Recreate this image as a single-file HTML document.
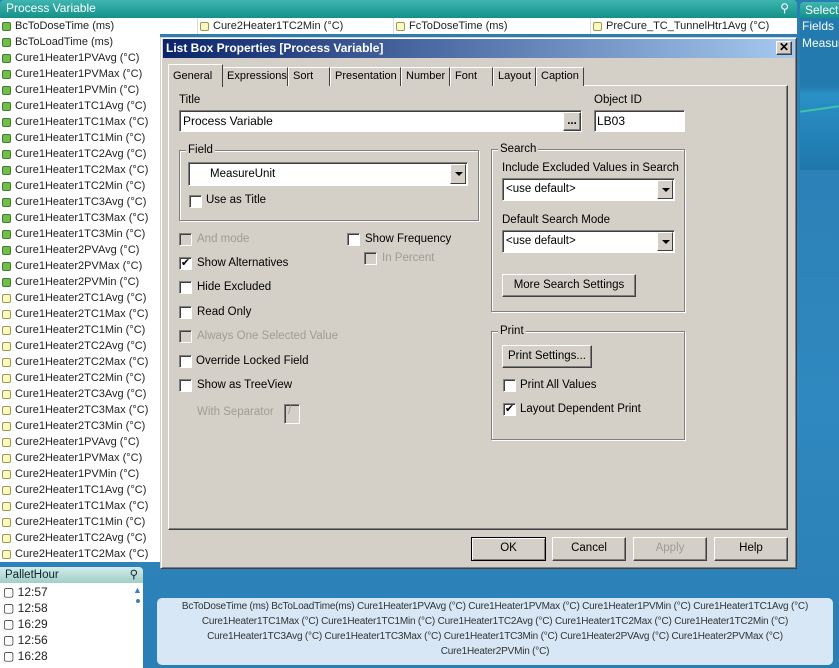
<!DOCTYPE html>
<html><head><meta charset="utf-8">
<style>
*{box-sizing:border-box;margin:0;padding:0}
body{width:839px;height:668px;overflow:hidden;position:relative;font-family:"Liberation Sans",sans-serif;font-size:11.5px;background:linear-gradient(180deg,#2a7db1 0%,#2f88bf 60%,#2a7fb5 100%)}
.a{position:absolute}
.hdr{background:linear-gradient(180deg,#3fb5b0,#139189);color:#fff;font-size:12px;padding-left:6px;line-height:17px;border-radius:4px 4px 0 0}
.row{position:absolute;left:0;height:16px;line-height:16px;font-size:11px;color:#222;white-space:nowrap;padding-left:15px}
.row i{position:absolute;left:2px;top:4px;width:9px;height:9px;border-radius:2px;border:1px solid #4a7a2a;background:#6cc04a}
.row.y i{background:#fdf8c0;border-color:#9a9a55}
.dlg{background:#d4d0c8}
.t{position:absolute;white-space:nowrap;color:#000}
.grey{color:#a09c94}
.inp{position:absolute;background:#fff;border:1px solid;border-color:#808080 #fff #fff #808080;box-shadow:inset 1px 1px 0 #404040}
.btn{position:absolute;background:#d4d0c8;border:1px solid;border-color:#fff #404040 #404040 #fff;box-shadow:inset -1px -1px 0 #808080;text-align:center;color:#000}
.cb{position:absolute;width:13px;height:13px;background:#fff;border:1px solid;border-color:#808080 #fff #fff #808080;box-shadow:inset 1px 1px 0 #404040;font-size:11px;line-height:11px;text-align:center}
.cb.d{background:#d4d0c8}
.grp{position:absolute;border:1px solid #808080;box-shadow:1px 1px 0 #fff, inset 1px 1px 0 #fff}
.grp span{position:absolute;top:-8px;left:6px;background:#d4d0c8;padding:0 2px;line-height:14px}
.dd{position:absolute;right:1px;top:1px;bottom:1px;width:16px;background:#d4d0c8;border:1px solid;border-color:#fff #404040 #404040 #fff}
.dd:after{content:"";position:absolute;left:4px;top:7px;border:4px solid transparent;border-top:4px solid #000;border-bottom:0}
.tab{position:absolute;top:67px;height:19px;border:1px solid;border-color:#fff #404040 transparent #fff;border-bottom:none;line-height:17px;padding-left:4px;background:#d4d0c8;font-size:11px;white-space:nowrap;overflow:hidden}
</style></head><body>

<div class="a hdr" style="left:0;top:0;width:797px;height:18px">Process Variable<span style="position:absolute;right:8px;top:0">&#9906;</span></div>
<div class="a" style="left:0;top:18px;width:797px;height:16px;background:#fff"></div>
<div class="a" style="left:197px;top:18px;width:1px;height:16px;background:#ddd"></div>
<div class="a" style="left:393px;top:18px;width:1px;height:16px;background:#ddd"></div>
<div class="a" style="left:590px;top:18px;width:1px;height:16px;background:#ddd"></div>
<div class="row y" style="left:198px;top:18px"><i></i>Cure2Heater1TC2Min (°C)</div>
<div class="row y" style="left:394px;top:18px"><i></i>FcToDoseTime (ms)</div>
<div class="row y" style="left:591px;top:18px"><i></i>PreCure_TC_TunnelHtr1Avg (°C)</div>
<div class="a" style="left:0;top:34px;width:160px;height:528px;background:#fff"></div>
<div class="row" style="top:18px"><i></i>BcToDoseTime (ms)</div>
<div class="row" style="top:34px"><i></i>BcToLoadTime (ms)</div>
<div class="row" style="top:50px"><i></i>Cure1Heater1PVAvg (°C)</div>
<div class="row" style="top:66px"><i></i>Cure1Heater1PVMax (°C)</div>
<div class="row" style="top:82px"><i></i>Cure1Heater1PVMin (°C)</div>
<div class="row" style="top:98px"><i></i>Cure1Heater1TC1Avg (°C)</div>
<div class="row" style="top:114px"><i></i>Cure1Heater1TC1Max (°C)</div>
<div class="row" style="top:130px"><i></i>Cure1Heater1TC1Min (°C)</div>
<div class="row" style="top:146px"><i></i>Cure1Heater1TC2Avg (°C)</div>
<div class="row" style="top:162px"><i></i>Cure1Heater1TC2Max (°C)</div>
<div class="row" style="top:178px"><i></i>Cure1Heater1TC2Min (°C)</div>
<div class="row" style="top:194px"><i></i>Cure1Heater1TC3Avg (°C)</div>
<div class="row" style="top:210px"><i></i>Cure1Heater1TC3Max (°C)</div>
<div class="row" style="top:226px"><i></i>Cure1Heater1TC3Min (°C)</div>
<div class="row" style="top:242px"><i></i>Cure1Heater2PVAvg (°C)</div>
<div class="row" style="top:258px"><i></i>Cure1Heater2PVMax (°C)</div>
<div class="row" style="top:274px"><i></i>Cure1Heater2PVMin (°C)</div>
<div class="row y" style="top:290px"><i></i>Cure1Heater2TC1Avg (°C)</div>
<div class="row y" style="top:306px"><i></i>Cure1Heater2TC1Max (°C)</div>
<div class="row y" style="top:322px"><i></i>Cure1Heater2TC1Min (°C)</div>
<div class="row y" style="top:338px"><i></i>Cure1Heater2TC2Avg (°C)</div>
<div class="row y" style="top:354px"><i></i>Cure1Heater2TC2Max (°C)</div>
<div class="row y" style="top:370px"><i></i>Cure1Heater2TC2Min (°C)</div>
<div class="row y" style="top:386px"><i></i>Cure1Heater2TC3Avg (°C)</div>
<div class="row y" style="top:402px"><i></i>Cure1Heater2TC3Max (°C)</div>
<div class="row y" style="top:418px"><i></i>Cure1Heater2TC3Min (°C)</div>
<div class="row y" style="top:434px"><i></i>Cure2Heater1PVAvg (°C)</div>
<div class="row y" style="top:450px"><i></i>Cure2Heater1PVMax (°C)</div>
<div class="row y" style="top:466px"><i></i>Cure2Heater1PVMin (°C)</div>
<div class="row y" style="top:482px"><i></i>Cure2Heater1TC1Avg (°C)</div>
<div class="row y" style="top:498px"><i></i>Cure2Heater1TC1Max (°C)</div>
<div class="row y" style="top:514px"><i></i>Cure2Heater1TC1Min (°C)</div>
<div class="row y" style="top:530px"><i></i>Cure2Heater1TC2Avg (°C)</div>
<div class="row y" style="top:546px"><i></i>Cure2Heater1TC2Max (°C)</div>

<div class="a" style="left:800px;top:18px;width:39px;height:152px;background:linear-gradient(180deg,#237aae 0%,#237aae 45%,#2a90c6 50%,#1f77ab 100%)"></div>
<div class="a" style="left:800px;top:108px;width:39px;height:2px;background:#3cc4a8;transform:rotate(-8deg)"></div>
<div class="a hdr" style="left:800px;top:2px;width:45px;height:16px;line-height:16px;padding-left:5px">Selecti</div>
<div class="t" style="left:802px;top:19px;color:#fff;font-size:12px">Fields</div>
<div class="t" style="left:802px;top:36px;color:#fff;font-size:12px">Measur</div>

<div class="a" style="left:0;top:567px;width:143px;height:16px;background:linear-gradient(180deg,#d4ece8,#a0cfc7);border-radius:0 4px 0 0;color:#123;padding-left:5px;line-height:16px">PalletHour<span style="position:absolute;right:5px">&#9906;</span></div>
<div class="a" style="left:0;top:583px;width:143px;height:85px;background:#fff"></div>
<div class="t" style="left:3px;top:584px;line-height:16px;font-size:12px;color:#222">▢ 12:57<br>▢ 12:58<br>▢ 16:29<br>▢ 12:56<br>▢ 16:28</div>
<div class="t" style="left:133px;top:585px;color:#3a7fbf;font-size:9px">▲</div>
<div class="a" style="left:136px;top:599px;width:4px;height:4px;border-radius:2px;background:#3a7fbf"></div>

<div class="a" style="left:157px;top:598px;width:676px;height:67px;background:#d7e7f5;border-radius:5px;text-align:center;font-size:10px;letter-spacing:-0.2px;line-height:15px;padding:1px 20px;color:#333">BcToDoseTime (ms) BcToLoadTime(ms) Cure1Heater1PVAvg (°C) Cure1Heater1PVMax (°C) Cure1Heater1PVMin (°C) Cure1Heater1TC1Avg (°C) Cure1Heater1TC1Max (°C) Cure1Heater1TC1Min (°C) Cure1Heater1TC2Avg (°C) Cure1Heater1TC2Max (°C) Cure1Heater1TC2Min (°C) Cure1Heater1TC3Avg (°C) Cure1Heater1TC3Max (°C) Cure1Heater1TC3Min (°C) Cure1Heater2PVAvg (°C) Cure1Heater2PVMax (°C) Cure1Heater2PVMin (°C)</div>

<div class="a dlg" style="left:160px;top:37px;width:637px;height:532px;border:1px solid;border-color:#d4d0c8 #404040 #404040 #d4d0c8;box-shadow:inset 1px 1px 0 #fff,inset -1px -1px 0 #808080"></div>
<div class="a" style="left:163px;top:39px;width:632px;height:19px;background:linear-gradient(90deg,#0a246a,#a6caf0);color:#fff;font-weight:bold;line-height:19px;padding-left:3px;font-size:12px">List Box Properties [Process Variable]</div>
<div class="btn" style="left:776px;top:41px;width:16px;height:14px;line-height:11px;font-weight:bold;font-size:12px">✕</div>

<div class="a" style="left:168px;top:85px;width:620px;height:445px;border:1px solid;border-color:#fff #404040 #404040 #fff;box-shadow:inset -1px -1px 0 #808080"></div>
<div class="tab" style="left:222px;width:66px">Expressions</div>
<div class="tab" style="left:288px;width:42px">Sort</div>
<div class="tab" style="left:330px;width:71px">Presentation</div>
<div class="tab" style="left:401px;width:49px">Number</div>
<div class="tab" style="left:450px;width:43px">Font</div>
<div class="tab" style="left:493px;width:43px">Layout</div>
<div class="tab" style="left:536px;width:48px">Caption</div>
<div class="tab" style="left:168px;top:64px;width:55px;height:23px;line-height:22px;border-right-color:#404040;z-index:2">General</div>

<div class="t" style="left:179px;top:94px">Title</div>
<div class="inp" style="left:179px;top:110px;width:403px;height:22px;padding:3px 3px;font-size:12px">Process Variable</div>
<div class="btn" style="left:563px;top:112px;width:18px;height:19px;line-height:16px;font-weight:bold">...</div>
<div class="t" style="left:594px;top:94px">Object ID</div>
<div class="inp" style="left:594px;top:110px;width:91px;height:22px;padding:3px 2px;font-size:12px">LB03</div>

<div class="grp" style="left:179px;top:150px;width:300px;height:71px"><span>Field</span></div>
<div class="inp" style="left:188px;top:162px;width:280px;height:24px;padding:5px 0 0 21px">MeasureUnit<div class="dd"></div></div>
<div class="cb" style="left:189px;top:195px"></div><div class="t" style="left:206px;top:194px">Use as Title</div>

<div class="cb d" style="left:179px;top:233px"></div><div class="t grey" style="left:197px;top:233px">And mode</div>
<div class="cb" style="left:179px;top:257px">✔</div><div class="t" style="left:197px;top:257px">Show Alternatives</div>
<div class="cb" style="left:179px;top:281px"></div><div class="t" style="left:197px;top:281px">Hide Excluded</div>
<div class="cb" style="left:179px;top:306px"></div><div class="t" style="left:197px;top:306px">Read Only</div>
<div class="cb d" style="left:179px;top:330px"></div><div class="t grey" style="left:197px;top:330px">Always One Selected Value</div>
<div class="cb" style="left:179px;top:355px"></div><div class="t" style="left:196px;top:355px">Override Locked Field</div>
<div class="cb" style="left:179px;top:379px"></div><div class="t" style="left:197px;top:379px">Show as TreeView</div>
<div class="t grey" style="left:197px;top:406px">With Separator</div>
<div class="inp" style="left:284px;top:404px;width:16px;height:20px;background:#d4d0c8;color:#999;padding-left:3px">/</div>
<div class="cb" style="left:347px;top:233px"></div><div class="t" style="left:365px;top:233px">Show Frequency</div>
<div class="cb d" style="left:364px;top:252px"></div><div class="t grey" style="left:382px;top:252px">In Percent</div>

<div class="grp" style="left:491px;top:149px;width:194px;height:163px"><span>Search</span></div>
<div class="t" style="left:502px;top:162px">Include Excluded Values in Search</div>
<div class="inp" style="left:502px;top:178px;width:173px;height:23px;padding:4px 3px">&lt;use default&gt;<div class="dd"></div></div>
<div class="t" style="left:502px;top:214px">Default Search Mode</div>
<div class="inp" style="left:502px;top:230px;width:173px;height:23px;padding:4px 3px">&lt;use default&gt;<div class="dd"></div></div>
<div class="btn" style="left:502px;top:274px;width:134px;height:23px;line-height:20px">More Search Settings</div>

<div class="grp" style="left:491px;top:331px;width:194px;height:109px"><span>Print</span></div>
<div class="btn" style="left:502px;top:345px;width:90px;height:23px;line-height:20px">Print Settings...</div>
<div class="cb" style="left:503px;top:379px"></div><div class="t" style="left:520px;top:379px">Print All Values</div>
<div class="cb" style="left:503px;top:403px">✔</div><div class="t" style="left:520px;top:403px">Layout Dependent Print</div>

<div class="btn" style="left:471px;top:537px;width:75px;height:24px;line-height:21px;border:1px solid #000;box-shadow:inset 1px 1px 0 #fff,inset -1px -1px 0 #808080">OK</div>
<div class="btn" style="left:552px;top:537px;width:74px;height:24px;line-height:21px">Cancel</div>
<div class="btn" style="left:633px;top:537px;width:74px;height:24px;line-height:21px;color:#a09c94">Apply</div>
<div class="btn" style="left:714px;top:537px;width:74px;height:24px;line-height:21px">Help</div>
</body></html>
